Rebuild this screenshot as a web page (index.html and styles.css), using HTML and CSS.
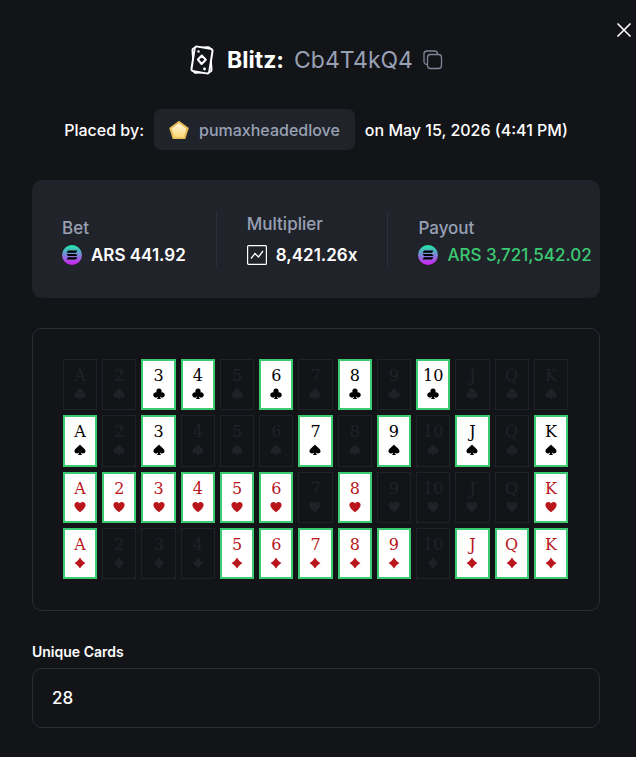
FILE: index.html
```html
<!DOCTYPE html>
<html lang="en">
<head>
    <meta charset="UTF-8">
    <meta name="viewport" content="width=device-width, initial-scale=1.0">
    <title>Blitz bet</title>
    <link rel="stylesheet" href="styles.css">
</head>
<body>
    <svg class="symbols" aria-hidden="true">
        <defs>
            <linearGradient id="solGradient" x1="0" y1="0" x2="0" y2="1">
                <stop offset="0" stop-color="#19f0a5"/>
                <stop offset="0.5" stop-color="#7b83d8"/>
                <stop offset="1" stop-color="#d41cf5"/>
            </linearGradient>
            <linearGradient id="goldGradient" x1="0" y1="0" x2="0" y2="1">
                <stop offset="0" stop-color="#fff5dc"/>
                <stop offset="1" stop-color="#fbd87a"/>
            </linearGradient>
        </defs>
        <symbol id="solana" viewBox="0 0 20 20">
            <circle cx="10" cy="10" r="10" fill="url(#solGradient)"/>
            <path d="M6 5.6h9.4l-1.4 2.2H4.6zM4.6 8.9H14l1.4 2.2H6zM6 12.2h9.4L14 14.4H4.6z"/>
        </symbol>
        <symbol id="clubs" viewBox="0 0 12 12">
            <path d="M6 .4a2.6 2.6 0 0 1 2.3 3.9A2.7 2.7 0 1 1 6.9 8.6c.1 1.1.6 1.8 1.5 2.4H3.6c.9-.6 1.4-1.3 1.5-2.4A2.7 2.7 0 1 1 3.7 4.3 2.6 2.6 0 0 1 6 .4z"/>
        </symbol>
        <symbol id="spades" viewBox="0 0 12 12">
            <path d="M6 .5C7.3 2.7 11.5 4.5 11.5 7.2c0 2.3-3.1 2.9-4.7 1.2.1 1.2.6 2 1.500 2.600H3.700c.9-.6 1.400-1.400 1.500-2.600C3.600 10.100.5 9.500.5 7.200.5 4.500 4.700 2.700 6 .5z"/>
        </symbol>
        <symbol id="hearts" viewBox="0 0 12 12">
            <path d="M6 11.300C3.500 9.200.4 6.800.4 4 .4 1 4.400-.2 6 2.600 7.600-.2 11.600 1 11.600 4c0 2.800-3.100 5.200-5.600 7.300z"/>
        </symbol>
        <symbol id="diamonds" viewBox="0 0 12 12">
            <path d="M6 .4C7.400 2.700 9 4.600 11.500 6 9 7.400 7.400 9.300 6 11.600 4.600 9.300 3 7.400.5 6 3 4.600 4.600 2.700 6 .4z"/>
        </symbol>
    </svg>

    <button class="close" type="button" aria-label="Close">
        <svg width="16" height="16" viewBox="0 0 16 16"><path d="M1.500 1.500l13 13M14.500 1.500l-13 13" stroke="#fff" stroke-width="1.600"/></svg>
    </button>

    <main class="bet">
        <h1 class="title">
            <svg class="game-icon" width="26" height="32" viewBox="0 0 26 32" fill="none" stroke="#fff" stroke-width="1.600" stroke-linejoin="round">
                <rect x="4" y="3.500" width="18" height="25" rx="2.500" transform="rotate(-4 13 16)"/>
                <rect x="4" y="3.500" width="18" height="25" rx="2.500" transform="rotate(9 13 16)" fill="#131418" stroke-width="2"/>
                <path d="M12.800 11.500l4 4.200-4.200 4.300-3.700-4.500z" stroke-width="2"/>
                <circle cx="9.500" cy="7.500" r="1.200" fill="#fff" stroke="none"/>
                <circle cx="15.500" cy="25" r="1.400" fill="#fff" stroke="none"/>
            </svg>
            <span>Blitz:</span>
            <span class="bet-id">Cb4T4kQ4</span>
            <button class="copy" type="button" aria-label="Copy bet id">
                <svg width="20" height="20" viewBox="0 0 20 20" fill="none" stroke="#7d8597" stroke-width="1.300">
                    <rect x="4.500" y="4.500" width="14" height="14" rx="3"/>
                    <path d="M4.500 14.500H4a3 3 0 0 1-3-3V4a3 3 0 0 1 3-3h7.500a3 3 0 0 1 3 3v.5"/>
                </svg>
            </button>
        </h1>

        <div class="placed">
            <span>Placed by:</span>
            <a class="player" href="#">
                <svg width="20" height="20" viewBox="0 0 20 20">
                    <path d="M10 .8L19.800 8 16.300 19H3.700L.2 8z" fill="#e7bd55"/>
                    <path d="M10 3.300L17.300 8.600 14.800 17.200H5.200L2.700 8.600z" fill="url(#goldGradient)"/>
                </svg>
                pumaxheadedlove
            </a>
            <span>on May 15, 2026 (4:41 PM)</span>
        </div>

        <section class="stats">
            <div class="stat">
                <span class="stat-label">Bet</span>
                <span class="stat-value"><svg width="20" height="20"><use href="#solana"/></svg>ARS 441.92</span>
            </div>
            <div class="stat stat-tall">
                <span class="stat-label">Multiplier</span>
                <span class="stat-value">
                    <svg width="20" height="20" viewBox="0 0 20 20" fill="none" stroke="#fff">
                        <rect x=".6" y=".6" width="18.800" height="18.800" rx="1" stroke-width="1.200"/>
                        <path d="M4 13.500l4-5 3.500 3.500L16 6" stroke-width="1.300"/>
                    </svg>8,421.26x
                </span>
            </div>
            <div class="stat">
                <span class="stat-label">Payout</span>
                <span class="stat-value win"><svg width="20" height="20"><use href="#solana"/></svg>ARS 3,721,542.02</span>
            </div>
        </section>

        <section class="board" id="board"></section>

        <label class="field-label" for="unique">Unique Cards</label>
        <input class="field" id="unique" type="text" value="28" readonly>
    </main>
    <script src="script.js"></script>
</body>
</html>
```
FILE: styles.css
```css
* {
    box-sizing: border-box;
}
body {
    margin: 0;
    background-color: #131418;
    color: #fff;
    font-family: Inter, "Liberation Sans", sans-serif;
    font-size: 17px;
    line-height: 24px;
}
button {
    padding: 0;
    border: none;
    background: none;
    cursor: pointer;
}
svg {
    display: block;
    flex: none;
}
.symbols {
    position: absolute;
    width: 0;
    height: 0;
}
.close {
    position: absolute;
    top: 22px;
    right: 4px;
}
.bet {
    padding: 40px 36px 29px 32px;
}
.title {
    display: flex;
    align-items: center;
    justify-content: center;
    gap: 10px;
    margin: 0 0 29px;
    font-size: 23px;
    font-weight: 700;
    line-height: 40px;
}
.game-icon {
    margin-right: 2px;
}
.bet-id {
    color: #98a1b3;
    font-weight: 400;
}
.placed {
    display: flex;
    align-items: center;
    justify-content: center;
    gap: 10px;
    margin-bottom: 30px;
    font-size: 16px;
    font-weight: 500;
    white-space: nowrap;
}
.player {
    display: flex;
    align-items: center;
    gap: 10px;
    height: 41px;
    padding: 0 15px;
    border-radius: 7px;
    background-color: #21232b;
    color: #98a1b3;
    text-decoration: none;
}
.stats {
    display: flex;
    align-items: stretch;
    padding: 32px 0;
    border-radius: 10px;
    background-color: #21232b;
    white-space: nowrap;
}
.stat {
    display: flex;
    flex-direction: column;
    justify-content: flex-end;
    gap: 4px;
    padding: 0 30px;
    border-left: 1px solid #2d303a;
}
.stat:first-child {
    border-left: none;
}
.stat:last-child {
    padding-right: 0;
}
.stat-tall {
    gap: 8px;
}
.stat-label {
    color: #98a1b3;
    font-weight: 500;
    line-height: 24px;
}
.stat-value {
    display: flex;
    align-items: center;
    gap: 9px;
    line-height: 22px;
    font-weight: 600;
}
.win {
    color: #3bc972;
    font-weight: 500;
}
.board {
    display: grid;
    grid-template-columns: repeat(13, 1fr);
    gap: 5px;
    margin: 30px 0 31px;
    padding: 30px 31px 31px 30px;
    border: 1px solid #2a2c36;
    border-radius: 10px;
}
.card {
    display: flex;
    flex-direction: column;
    align-items: center;
    aspect-ratio: 2 / 3;
    padding-top: 6px;
    border: 1px solid #202229;
    color: #202229;
    fill: #202229;
    font-family: "DejaVu Serif", serif;
    font-size: 16px;
    line-height: 20px;
}
.card svg {
    margin-top: 2px;
}
.card.drawn {
    padding-top: 5px;
    border: 2px solid #3bc972;
    background-color: #fff;
    color: #000;
    fill: #000;
}
.card.drawn.red {
    color: #b9161c;
    fill: #b9161c;
}
.field-label {
    display: block;
    margin-bottom: 6px;
    font-size: 14px;
    font-weight: 600;
    line-height: 20px;
}
.field {
    display: block;
    width: 100%;
    height: 60px;
    padding: 0 19px;
    border: 1px solid #2a2c36;
    border-radius: 10px;
    background: none;
    color: #fff;
    font: inherit;
    font-weight: 500;
}
```
FILE: script.js
```js
const ranks = ["A", "2", "3", "4", "5", "6", "7", "8", "9", "10", "J", "Q", "K"];
const drawn = {
    clubs: ["3", "4", "6", "8", "10"],
    spades: ["A", "3", "7", "9", "J", "K"],
    hearts: ["A", "2", "3", "4", "5", "6", "8", "K"],
    diamonds: ["A", "5", "6", "7", "8", "9", "J", "Q", "K"]
};

const board = document.getElementById("board");
for (const suit in drawn) {
    ranks.forEach((rank) => {
        const card = document.createElement("div");
        card.className = "card";
        if (drawn[suit].includes(rank)) card.classList.add("drawn");
        if (suit === "hearts" || suit === "diamonds") card.classList.add("red");
        card.innerHTML = `<span>${rank}</span><svg width="12" height="12"><use href="#${suit}"/></svg>`;
        board.appendChild(card);
    });
}
```
